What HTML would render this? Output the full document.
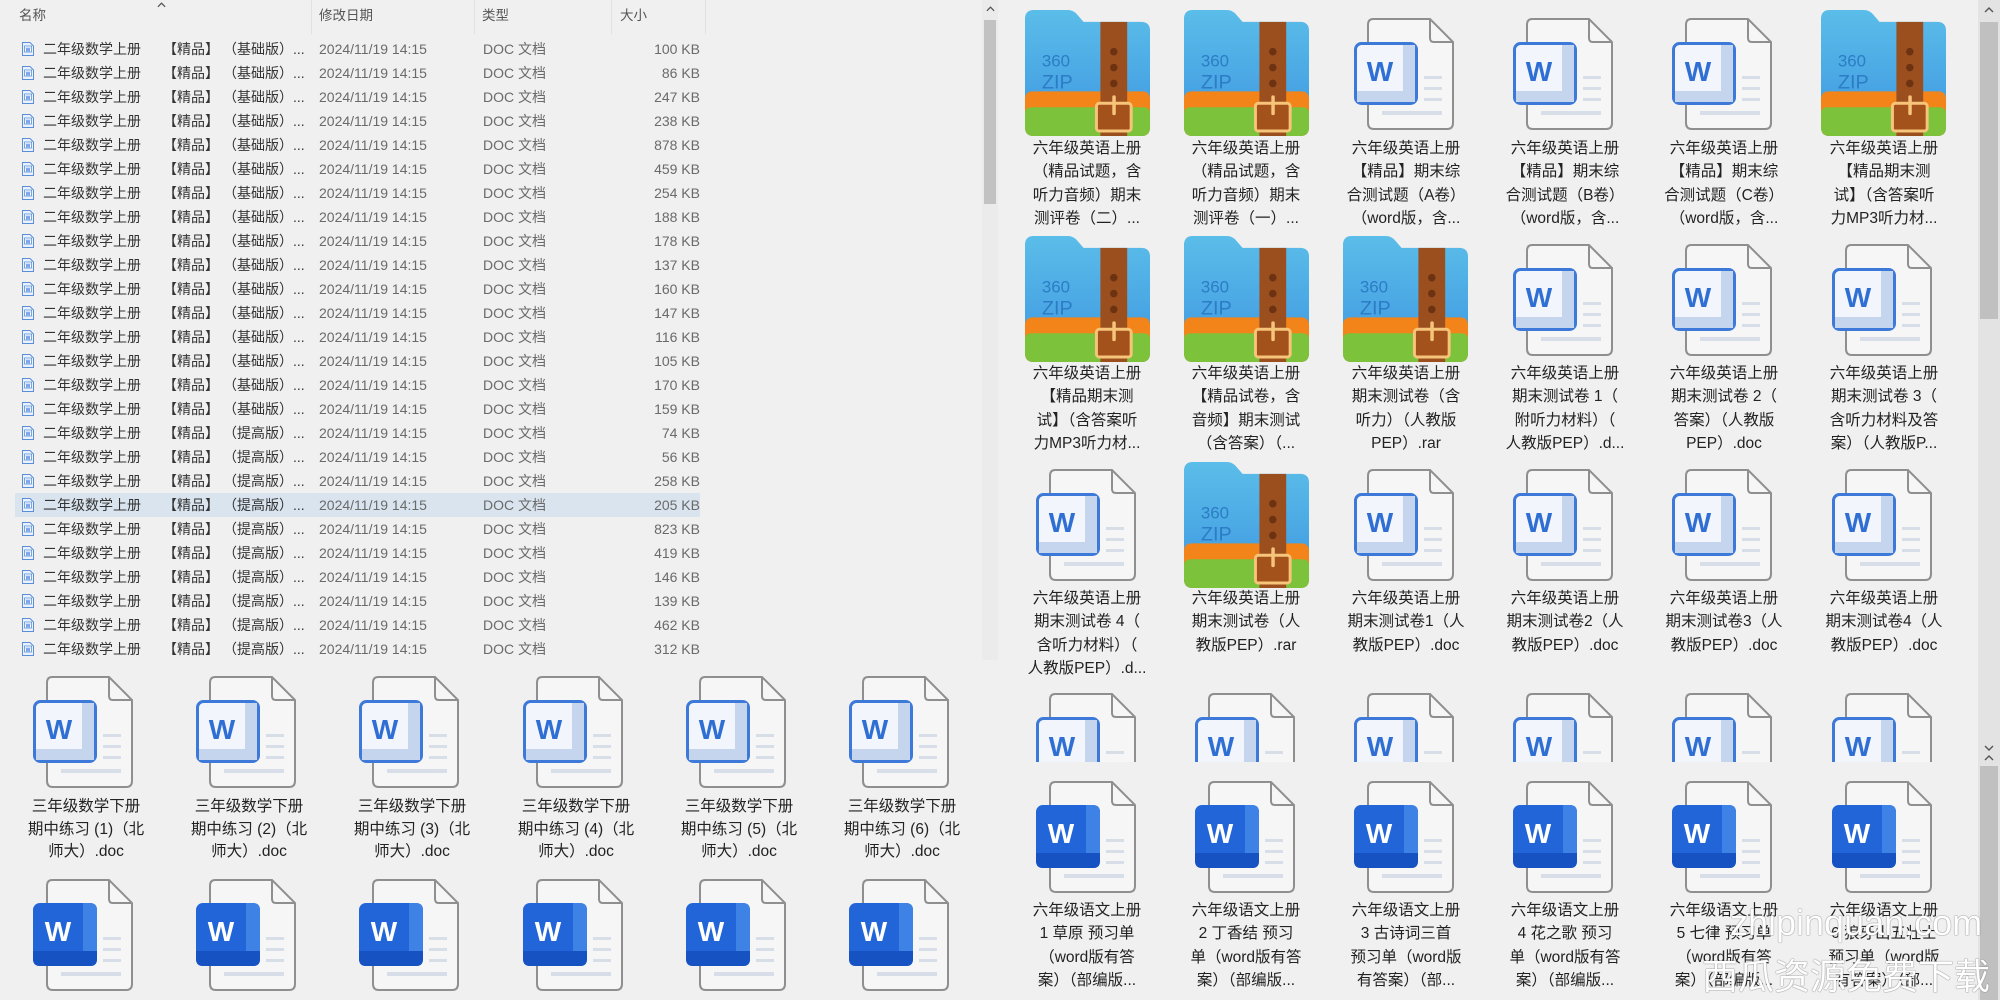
<!DOCTYPE html>
<html><head><meta charset="utf-8">
<style>
*{margin:0;padding:0;box-sizing:border-box}
body{width:2000px;height:1000px;overflow:hidden;background:#f0f0f0;position:relative;font-family:"Liberation Sans","Noto Sans CJK SC",sans-serif;color:#222}
.a{position:absolute}
.hd{position:absolute;top:0;height:34px;font-size:13.5px;color:#555;line-height:32px}
.sep{position:absolute;top:0;width:1px;height:34px;background:#e2e2e2}
.row{position:absolute;left:15px;width:685px;height:24px;font-size:14px;line-height:24px;white-space:nowrap}
.row span{position:absolute}
.row .n{left:28px;color:#333}
.row .b{left:148px;color:#333}
.row .c{left:208px;color:#333}
.row .d{left:304px;color:#6a6a6a}
.row .t{left:468px;color:#6a6a6a}
.row .s{right:0;color:#6a6a6a}
.row svg{position:absolute;left:6px;top:4px}
.sel{background:#d9e4ef}
.lab{position:absolute;width:170px;text-align:center;font-size:15.5px;line-height:23.3px;white-space:nowrap;color:#222}
.ic{position:absolute}
.clip{position:absolute;overflow:hidden}
</style></head><body>
<svg width="0" height="0" style="position:absolute">
<defs>
<symbol id="wo" viewBox="0 0 100 112">
<path d="M19 1 H76 L99 24 V105 Q99 111 93 111 H20 Q14 111 14 105 V7 Q14 1 19 1 Z" fill="#f6f6f6" stroke="#8f8f8f" stroke-width="2"/>
<path d="M76 1 V20 Q76 24 80 24 H99" fill="none" stroke="#8f8f8f" stroke-width="2"/>
<rect x="70" y="58" width="18" height="3" fill="#d8dee8"/><rect x="70" y="69" width="18" height="3" fill="#d8dee8"/><rect x="70" y="80" width="18" height="3" fill="#d8dee8"/><rect x="28" y="93" width="60" height="4" fill="#d8dee8"/>
<rect x="1.5" y="25.5" width="61" height="60" rx="6" fill="#f2f5fb" stroke="#3c79d8" stroke-width="3"/>
<rect x="49" y="27" width="12" height="57" fill="#c6d5ee"/>
<rect x="3" y="73" width="58" height="11" fill="#c6d5ee"/>
<text x="26" y="63" text-anchor="middle" font-family="Liberation Sans,sans-serif" font-weight="bold" font-size="28" fill="#2f6fd4">W</text>
</symbol>
<symbol id="wf" viewBox="0 0 100 112">
<path d="M19 1 H76 L99 24 V105 Q99 111 93 111 H20 Q14 111 14 105 V7 Q14 1 19 1 Z" fill="#f6f6f6" stroke="#8f8f8f" stroke-width="2"/>
<path d="M76 1 V20 Q76 24 80 24 H99" fill="none" stroke="#8f8f8f" stroke-width="2"/>
<rect x="70" y="58" width="18" height="3" fill="#d8dee8"/><rect x="70" y="69" width="18" height="3" fill="#d8dee8"/><rect x="70" y="80" width="18" height="3" fill="#d8dee8"/><rect x="28" y="93" width="60" height="4" fill="#d8dee8"/>
<rect x="0" y="24" width="64" height="63" rx="7" fill="#2265d8"/>
<path d="M50 24 H57 Q64 24 64 31 V80 Q64 87 57 87 H50 Z" fill="#3f82e6"/>
<path d="M0 72 H64 V80 Q64 87 57 87 H7 Q0 87 0 80 Z" fill="#1652c2"/>
<text x="25" y="62" text-anchor="middle" font-family="Liberation Sans,sans-serif" font-weight="bold" font-size="28" fill="#fff">W</text>
</symbol>
<symbol id="zp" viewBox="0 0 128 128">
<defs><linearGradient id="gb" x1="0" y1="0" x2="0" y2="1"><stop offset="0" stop-color="#5bbde9"/><stop offset="1" stop-color="#3d96e0"/></linearGradient></defs>
<path d="M10 0 H44 Q50 0 54 5 L60 12 H118 Q127 12 127 21 V118 Q127 127 118 127 H10 Q1 127 1 118 V9 Q1 0 10 0 Z" fill="url(#gb)"/>
<path d="M1 90 Q1 82 9 82 H119 Q127 82 127 90 V118 Q127 127 118 127 H10 Q1 127 1 118 Z" fill="#f2841a"/>
<path d="M1 104 Q1 98 8 98 H120 Q127 98 127 104 V118 Q127 127 118 127 H10 Q1 127 1 118 Z" fill="#7cc23a"/>
<rect x="77" y="12" width="27" height="115" fill="#9b4f1f"/>
<circle cx="90.5" cy="42" r="3.8" fill="#6d3212"/><circle cx="90.5" cy="58" r="3.8" fill="#6d3212"/><circle cx="90.5" cy="74" r="3.8" fill="#6d3212"/>
<rect x="73" y="94" width="35" height="28" rx="3" fill="#a4521c" stroke="#f6c57a" stroke-width="3"/>
<rect x="89" y="86" width="3.5" height="20" rx="1.5" fill="#f6c57a"/>
<text x="18" y="57" font-family="Liberation Sans,sans-serif" font-size="17" fill="#2c7cc6">360</text>
<text x="18" y="79" font-family="Liberation Sans,sans-serif" font-size="20" fill="#2c7cc6">ZIP</text>
</symbol>
<symbol id="sd" viewBox="0 0 14 16">
<path d="M1.5 1.5 H9 L12.5 5 V14.5 H1.5 Z" fill="#eaf1fb" stroke="#5a8ed8" stroke-width="1"/>
<rect x="3.5" y="5" width="7" height="6" fill="#fff" stroke="#5a8ed8" stroke-width="0.8"/>
<text x="7" y="10.3" text-anchor="middle" font-size="5" font-family="Liberation Sans" fill="#2f6fd4" font-weight="bold">W</text>
</symbol>
<symbol id="up" viewBox="0 0 10 6"><path d="M1 5 L5 1 L9 5" fill="none" stroke="#555" stroke-width="1.4"/></symbol>
<symbol id="dn" viewBox="0 0 10 6"><path d="M1 1 L5 5 L9 1" fill="none" stroke="#555" stroke-width="1.4"/></symbol>
</defs></svg>

<div class="hd" style="left:19px">名称</div>
<svg class="a" style="left:157px;top:2px" width="9" height="6"><use href="#up"/></svg>
<div class="hd" style="left:319px">修改日期</div>
<div class="hd" style="left:482px">类型</div>
<div class="hd" style="left:620px">大小</div>
<div class="sep" style="left:311px"></div><div class="sep" style="left:474px"></div><div class="sep" style="left:611px"></div><div class="sep" style="left:705px"></div>

<div class="row" style="top:37px"><svg width="14" height="16"><use href="#sd"/></svg><span class="n">二年级数学上册</span><span class="b">【精品】</span><span class="c">（基础版）...</span><span class="d">2024/11/19 14:15</span><span class="t">DOC 文档</span><span class="s">100 KB</span></div>
<div class="row" style="top:61px"><svg width="14" height="16"><use href="#sd"/></svg><span class="n">二年级数学上册</span><span class="b">【精品】</span><span class="c">（基础版）...</span><span class="d">2024/11/19 14:15</span><span class="t">DOC 文档</span><span class="s">86 KB</span></div>
<div class="row" style="top:85px"><svg width="14" height="16"><use href="#sd"/></svg><span class="n">二年级数学上册</span><span class="b">【精品】</span><span class="c">（基础版）...</span><span class="d">2024/11/19 14:15</span><span class="t">DOC 文档</span><span class="s">247 KB</span></div>
<div class="row" style="top:109px"><svg width="14" height="16"><use href="#sd"/></svg><span class="n">二年级数学上册</span><span class="b">【精品】</span><span class="c">（基础版）...</span><span class="d">2024/11/19 14:15</span><span class="t">DOC 文档</span><span class="s">238 KB</span></div>
<div class="row" style="top:133px"><svg width="14" height="16"><use href="#sd"/></svg><span class="n">二年级数学上册</span><span class="b">【精品】</span><span class="c">（基础版）...</span><span class="d">2024/11/19 14:15</span><span class="t">DOC 文档</span><span class="s">878 KB</span></div>
<div class="row" style="top:157px"><svg width="14" height="16"><use href="#sd"/></svg><span class="n">二年级数学上册</span><span class="b">【精品】</span><span class="c">（基础版）...</span><span class="d">2024/11/19 14:15</span><span class="t">DOC 文档</span><span class="s">459 KB</span></div>
<div class="row" style="top:181px"><svg width="14" height="16"><use href="#sd"/></svg><span class="n">二年级数学上册</span><span class="b">【精品】</span><span class="c">（基础版）...</span><span class="d">2024/11/19 14:15</span><span class="t">DOC 文档</span><span class="s">254 KB</span></div>
<div class="row" style="top:205px"><svg width="14" height="16"><use href="#sd"/></svg><span class="n">二年级数学上册</span><span class="b">【精品】</span><span class="c">（基础版）...</span><span class="d">2024/11/19 14:15</span><span class="t">DOC 文档</span><span class="s">188 KB</span></div>
<div class="row" style="top:229px"><svg width="14" height="16"><use href="#sd"/></svg><span class="n">二年级数学上册</span><span class="b">【精品】</span><span class="c">（基础版）...</span><span class="d">2024/11/19 14:15</span><span class="t">DOC 文档</span><span class="s">178 KB</span></div>
<div class="row" style="top:253px"><svg width="14" height="16"><use href="#sd"/></svg><span class="n">二年级数学上册</span><span class="b">【精品】</span><span class="c">（基础版）...</span><span class="d">2024/11/19 14:15</span><span class="t">DOC 文档</span><span class="s">137 KB</span></div>
<div class="row" style="top:277px"><svg width="14" height="16"><use href="#sd"/></svg><span class="n">二年级数学上册</span><span class="b">【精品】</span><span class="c">（基础版）...</span><span class="d">2024/11/19 14:15</span><span class="t">DOC 文档</span><span class="s">160 KB</span></div>
<div class="row" style="top:301px"><svg width="14" height="16"><use href="#sd"/></svg><span class="n">二年级数学上册</span><span class="b">【精品】</span><span class="c">（基础版）...</span><span class="d">2024/11/19 14:15</span><span class="t">DOC 文档</span><span class="s">147 KB</span></div>
<div class="row" style="top:325px"><svg width="14" height="16"><use href="#sd"/></svg><span class="n">二年级数学上册</span><span class="b">【精品】</span><span class="c">（基础版）...</span><span class="d">2024/11/19 14:15</span><span class="t">DOC 文档</span><span class="s">116 KB</span></div>
<div class="row" style="top:349px"><svg width="14" height="16"><use href="#sd"/></svg><span class="n">二年级数学上册</span><span class="b">【精品】</span><span class="c">（基础版）...</span><span class="d">2024/11/19 14:15</span><span class="t">DOC 文档</span><span class="s">105 KB</span></div>
<div class="row" style="top:373px"><svg width="14" height="16"><use href="#sd"/></svg><span class="n">二年级数学上册</span><span class="b">【精品】</span><span class="c">（基础版）...</span><span class="d">2024/11/19 14:15</span><span class="t">DOC 文档</span><span class="s">170 KB</span></div>
<div class="row" style="top:397px"><svg width="14" height="16"><use href="#sd"/></svg><span class="n">二年级数学上册</span><span class="b">【精品】</span><span class="c">（基础版）...</span><span class="d">2024/11/19 14:15</span><span class="t">DOC 文档</span><span class="s">159 KB</span></div>
<div class="row" style="top:421px"><svg width="14" height="16"><use href="#sd"/></svg><span class="n">二年级数学上册</span><span class="b">【精品】</span><span class="c">（提高版）...</span><span class="d">2024/11/19 14:15</span><span class="t">DOC 文档</span><span class="s">74 KB</span></div>
<div class="row" style="top:445px"><svg width="14" height="16"><use href="#sd"/></svg><span class="n">二年级数学上册</span><span class="b">【精品】</span><span class="c">（提高版）...</span><span class="d">2024/11/19 14:15</span><span class="t">DOC 文档</span><span class="s">56 KB</span></div>
<div class="row" style="top:469px"><svg width="14" height="16"><use href="#sd"/></svg><span class="n">二年级数学上册</span><span class="b">【精品】</span><span class="c">（提高版）...</span><span class="d">2024/11/19 14:15</span><span class="t">DOC 文档</span><span class="s">258 KB</span></div>
<div class="row sel" style="top:493px"><svg width="14" height="16"><use href="#sd"/></svg><span class="n">二年级数学上册</span><span class="b">【精品】</span><span class="c">（提高版）...</span><span class="d">2024/11/19 14:15</span><span class="t">DOC 文档</span><span class="s">205 KB</span></div>
<div class="row" style="top:517px"><svg width="14" height="16"><use href="#sd"/></svg><span class="n">二年级数学上册</span><span class="b">【精品】</span><span class="c">（提高版）...</span><span class="d">2024/11/19 14:15</span><span class="t">DOC 文档</span><span class="s">823 KB</span></div>
<div class="row" style="top:541px"><svg width="14" height="16"><use href="#sd"/></svg><span class="n">二年级数学上册</span><span class="b">【精品】</span><span class="c">（提高版）...</span><span class="d">2024/11/19 14:15</span><span class="t">DOC 文档</span><span class="s">419 KB</span></div>
<div class="row" style="top:565px"><svg width="14" height="16"><use href="#sd"/></svg><span class="n">二年级数学上册</span><span class="b">【精品】</span><span class="c">（提高版）...</span><span class="d">2024/11/19 14:15</span><span class="t">DOC 文档</span><span class="s">146 KB</span></div>
<div class="row" style="top:589px"><svg width="14" height="16"><use href="#sd"/></svg><span class="n">二年级数学上册</span><span class="b">【精品】</span><span class="c">（提高版）...</span><span class="d">2024/11/19 14:15</span><span class="t">DOC 文档</span><span class="s">139 KB</span></div>
<div class="row" style="top:613px"><svg width="14" height="16"><use href="#sd"/></svg><span class="n">二年级数学上册</span><span class="b">【精品】</span><span class="c">（提高版）...</span><span class="d">2024/11/19 14:15</span><span class="t">DOC 文档</span><span class="s">462 KB</span></div>
<div class="row" style="top:637px"><svg width="14" height="16"><use href="#sd"/></svg><span class="n">二年级数学上册</span><span class="b">【精品】</span><span class="c">（提高版）...</span><span class="d">2024/11/19 14:15</span><span class="t">DOC 文档</span><span class="s">312 KB</span></div>

<div class="a" style="left:982px;top:0;width:16px;height:660px;background:#ebebeb"></div>
<div class="a" style="left:984px;top:20px;width:12px;height:184px;background:#c2c2c2"></div>
<svg class="a" style="left:986px;top:6px" width="9" height="6"><use href="#up"/></svg>

<svg class="ic" style="left:33px;top:676px" width="100" height="112"><use href="#wo"/></svg>
<svg class="ic" style="left:196px;top:676px" width="100" height="112"><use href="#wo"/></svg>
<svg class="ic" style="left:359px;top:676px" width="100" height="112"><use href="#wo"/></svg>
<svg class="ic" style="left:523px;top:676px" width="100" height="112"><use href="#wo"/></svg>
<svg class="ic" style="left:686px;top:676px" width="100" height="112"><use href="#wo"/></svg>
<svg class="ic" style="left:849px;top:676px" width="100" height="112"><use href="#wo"/></svg>
<div class="lab" style="left:1px;top:796px;line-height:22.5px">三年级数学下册<br>期中练习 (1)（北<br>师大）.doc</div>
<div class="lab" style="left:164px;top:796px;line-height:22.5px">三年级数学下册<br>期中练习 (2)（北<br>师大）.doc</div>
<div class="lab" style="left:327px;top:796px;line-height:22.5px">三年级数学下册<br>期中练习 (3)（北<br>师大）.doc</div>
<div class="lab" style="left:491px;top:796px;line-height:22.5px">三年级数学下册<br>期中练习 (4)（北<br>师大）.doc</div>
<div class="lab" style="left:654px;top:796px;line-height:22.5px">三年级数学下册<br>期中练习 (5)（北<br>师大）.doc</div>
<div class="lab" style="left:817px;top:796px;line-height:22.5px">三年级数学下册<br>期中练习 (6)（北<br>师大）.doc</div>
<svg class="ic" style="left:33px;top:879px" width="100" height="112"><use href="#wf"/></svg>
<svg class="ic" style="left:196px;top:879px" width="100" height="112"><use href="#wf"/></svg>
<svg class="ic" style="left:359px;top:879px" width="100" height="112"><use href="#wf"/></svg>
<svg class="ic" style="left:523px;top:879px" width="100" height="112"><use href="#wf"/></svg>
<svg class="ic" style="left:686px;top:879px" width="100" height="112"><use href="#wf"/></svg>
<svg class="ic" style="left:849px;top:879px" width="100" height="112"><use href="#wf"/></svg>

<svg class="ic" style="left:1024px;top:10px" width="127" height="127"><use href="#zp"/></svg>
<svg class="ic" style="left:1183px;top:10px" width="127" height="127"><use href="#zp"/></svg>
<svg class="ic" style="left:1354px;top:18px" width="100" height="112"><use href="#wo"/></svg>
<svg class="ic" style="left:1513px;top:18px" width="100" height="112"><use href="#wo"/></svg>
<svg class="ic" style="left:1672px;top:18px" width="100" height="112"><use href="#wo"/></svg>
<svg class="ic" style="left:1820px;top:10px" width="127" height="127"><use href="#zp"/></svg>
<div class="lab" style="left:1002px;top:137px">六年级英语上册<br>（精品试题，含<br>听力音频）期末<br>测评卷（二）...</div>
<div class="lab" style="left:1161px;top:137px">六年级英语上册<br>（精品试题，含<br>听力音频）期末<br>测评卷（一）...</div>
<div class="lab" style="left:1321px;top:137px">六年级英语上册<br>【精品】期末综<br>合测试题（A卷）<br>（word版，含...</div>
<div class="lab" style="left:1480px;top:137px">六年级英语上册<br>【精品】期末综<br>合测试题（B卷）<br>（word版，含...</div>
<div class="lab" style="left:1639px;top:137px">六年级英语上册<br>【精品】期末综<br>合测试题（C卷）<br>（word版，含...</div>
<div class="lab" style="left:1799px;top:137px">六年级英语上册<br>【精品期末测<br>试】（含答案听<br>力MP3听力材...</div>

<svg class="ic" style="left:1024px;top:236px" width="127" height="127"><use href="#zp"/></svg>
<svg class="ic" style="left:1183px;top:236px" width="127" height="127"><use href="#zp"/></svg>
<svg class="ic" style="left:1342px;top:236px" width="127" height="127"><use href="#zp"/></svg>
<svg class="ic" style="left:1513px;top:244px" width="100" height="112"><use href="#wo"/></svg>
<svg class="ic" style="left:1672px;top:244px" width="100" height="112"><use href="#wo"/></svg>
<svg class="ic" style="left:1832px;top:244px" width="100" height="112"><use href="#wo"/></svg>
<div class="lab" style="left:1002px;top:362px">六年级英语上册<br>【精品期末测<br>试】（含答案听<br>力MP3听力材...</div>
<div class="lab" style="left:1161px;top:362px">六年级英语上册<br>【精品试卷，含<br>音频】期末测试<br>（含答案）（...</div>
<div class="lab" style="left:1321px;top:362px">六年级英语上册<br>期末测试卷（含<br>听力）（人教版<br>PEP）.rar</div>
<div class="lab" style="left:1480px;top:362px">六年级英语上册<br>期末测试卷 1（<br>附听力材料）（<br>人教版PEP）.d...</div>
<div class="lab" style="left:1639px;top:362px">六年级英语上册<br>期末测试卷 2（<br>答案）（人教版<br>PEP）.doc</div>
<div class="lab" style="left:1799px;top:362px">六年级英语上册<br>期末测试卷 3（<br>含听力材料及答<br>案）（人教版P...</div>

<svg class="ic" style="left:1036px;top:469px" width="100" height="112"><use href="#wo"/></svg>
<svg class="ic" style="left:1183px;top:462px" width="127" height="127"><use href="#zp"/></svg>
<svg class="ic" style="left:1354px;top:469px" width="100" height="112"><use href="#wo"/></svg>
<svg class="ic" style="left:1513px;top:469px" width="100" height="112"><use href="#wo"/></svg>
<svg class="ic" style="left:1672px;top:469px" width="100" height="112"><use href="#wo"/></svg>
<svg class="ic" style="left:1832px;top:469px" width="100" height="112"><use href="#wo"/></svg>
<div class="lab" style="left:1002px;top:587px">六年级英语上册<br>期末测试卷 4（<br>含听力材料）（<br>人教版PEP）.d...</div>
<div class="lab" style="left:1161px;top:587px">六年级英语上册<br>期末测试卷（人<br>教版PEP）.rar</div>
<div class="lab" style="left:1321px;top:587px">六年级英语上册<br>期末测试卷1（人<br>教版PEP）.doc</div>
<div class="lab" style="left:1480px;top:587px">六年级英语上册<br>期末测试卷2（人<br>教版PEP）.doc</div>
<div class="lab" style="left:1639px;top:587px">六年级英语上册<br>期末测试卷3（人<br>教版PEP）.doc</div>
<div class="lab" style="left:1799px;top:587px">六年级英语上册<br>期末测试卷4（人<br>教版PEP）.doc</div>

<div class="clip" style="left:1000px;top:690px;width:975px;height:72px">
<svg class="ic" style="left:36px;top:3px" width="100" height="112"><use href="#wo"/></svg>
<svg class="ic" style="left:195px;top:3px" width="100" height="112"><use href="#wo"/></svg>
<svg class="ic" style="left:354px;top:3px" width="100" height="112"><use href="#wo"/></svg>
<svg class="ic" style="left:513px;top:3px" width="100" height="112"><use href="#wo"/></svg>
<svg class="ic" style="left:672px;top:3px" width="100" height="112"><use href="#wo"/></svg>
<svg class="ic" style="left:832px;top:3px" width="100" height="112"><use href="#wo"/></svg>
</div>

<svg class="ic" style="left:1036px;top:781px" width="100" height="112"><use href="#wf"/></svg>
<svg class="ic" style="left:1195px;top:781px" width="100" height="112"><use href="#wf"/></svg>
<svg class="ic" style="left:1354px;top:781px" width="100" height="112"><use href="#wf"/></svg>
<svg class="ic" style="left:1513px;top:781px" width="100" height="112"><use href="#wf"/></svg>
<svg class="ic" style="left:1672px;top:781px" width="100" height="112"><use href="#wf"/></svg>
<svg class="ic" style="left:1832px;top:781px" width="100" height="112"><use href="#wf"/></svg>
<div class="lab" style="left:1002px;top:899px">六年级语文上册<br>1 草原 预习单<br>（word版有答<br>案）（部编版...</div>
<div class="lab" style="left:1161px;top:899px">六年级语文上册<br>2 丁香结 预习<br>单（word版有答<br>案）（部编版...</div>
<div class="lab" style="left:1321px;top:899px">六年级语文上册<br>3 古诗词三首<br>预习单（word版<br>有答案）（部...</div>
<div class="lab" style="left:1480px;top:899px">六年级语文上册<br>4 花之歌 预习<br>单（word版有答<br>案）（部编版...</div>
<div class="lab" style="left:1639px;top:899px">六年级语文上册<br>5 七律 预习单<br>（word版有答<br>案）（部编版...</div>
<div class="lab" style="left:1799px;top:899px">六年级语文上册<br>6 狼牙山五壮士<br>预习单（word版<br>有答案）（部...</div>

<div class="a" style="left:1978px;top:0;width:22px;height:1000px;background:#e3e3e3"></div>
<div class="a" style="left:1980px;top:22px;width:18px;height:297px;background:#c0c0c0"></div>
<div class="a" style="left:1980px;top:766px;width:18px;height:234px;background:#c0c0c0"></div>
<svg class="a" style="left:1984px;top:7px" width="10" height="6"><use href="#up"/></svg>
<svg class="a" style="left:1984px;top:745px" width="10" height="6"><use href="#dn"/></svg>
<svg class="a" style="left:1984px;top:755px" width="10" height="6"><use href="#up"/></svg>

<div class="a" style="left:1730px;top:902px;font-size:36px;color:#fff;text-shadow:0 0 1px #777,0 0 1px #777;white-space:nowrap">zhipinquan.com</div>
<div class="a" style="left:1702px;top:948px;font-size:36px;color:#fff;text-shadow:0 0 1px #777,0 0 1px #777;white-space:nowrap">西瓜资源免费下载</div>
</body></html>
